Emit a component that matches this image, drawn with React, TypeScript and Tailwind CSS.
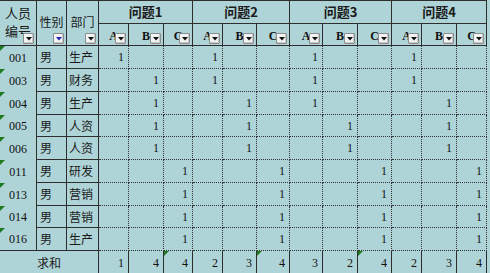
import React from 'react';

type Row = { id: string; sex: string; dept: string; picks: number[] };

const rows: Row[] = [
  { id: '001', sex: '男', dept: '生产', picks: [0, 0, 0, 0] },
  { id: '003', sex: '男', dept: '财务', picks: [1, 0, 0, 0] },
  { id: '004', sex: '男', dept: '生产', picks: [1, 1, 0, 1] },
  { id: '005', sex: '男', dept: '人资', picks: [1, 1, 1, 1] },
  { id: '006', sex: '男', dept: '人资', picks: [1, 1, 1, 1] },
  { id: '011', sex: '男', dept: '研发', picks: [2, 2, 2, 2] },
  { id: '013', sex: '男', dept: '营销', picks: [2, 2, 2, 2] },
  { id: '014', sex: '男', dept: '营销', picks: [2, 2, 2, 2] },
  { id: '016', sex: '男', dept: '生产', picks: [2, 2, 2, 2] },
];

const questions = ['问题1', '问题2', '问题3', '问题4'];
const letters = ['A', 'B', 'C'];

// totals per question/option, 12 cells
const sums = questions.flatMap((_, q) =>
  letters.map((_, o) => rows.filter((r) => r.picks[q] === o).length)
);

const cjk = "font-['Noto_Sans_CJK_SC',sans-serif]";
const num = "font-['Liberation_Serif',serif] text-[#111]";

function FilterButton({ active }: { active?: boolean }) {
  return (
    <span className="absolute right-[2px] bottom-[1px] flex h-[11px] w-[11px] items-center justify-center rounded-[1px] border border-[#8c8c8c] bg-[#f3f3f3] shadow-[inset_-1px_-1px_0_#c8c8c8]">
      <svg width="6" height="4" viewBox="0 0 6 4">
        <polygon points="0,0 6,0 3,3.5" fill={active ? '#2424b8' : '#111'} />
      </svg>
    </span>
  );
}

function Flag() {
  return (
    <span className="absolute left-0 top-0 h-0 w-0 border-t-[5px] border-r-[5px] border-t-[#1e7a1e] border-r-transparent" />
  );
}

export default function App() {
  return (
    <div className="h-[273px] w-[490px] overflow-hidden bg-[#afd4d8] text-[#1a1a1a]">
      <div className="grid w-[487px] grid-cols-[37px_30px_32px_30px_35px_29px_30px_34px_33px_33px_35px_34px_30px_35px_30px] grid-rows-[23px_22px_23px_23px_23px_22px_23px_23px_23px_22px_23px_23px] border-t border-[#2e2e2e]">
        {/* header */}
        <div className={`relative row-span-2 border-r border-b border-[#2e2e2e] pt-[3px] text-center text-[13px] leading-[18px] ${cjk}`}>
          人员<br />编号
          <FilterButton />
        </div>
        <div className={`relative row-span-2 flex items-center justify-center border-r border-b border-[#2e2e2e] pb-[2px] text-[12px] ${cjk}`}>
          性别
          <FilterButton active />
        </div>
        <div className={`relative row-span-2 flex items-center justify-center border-r border-b border-[#2e2e2e] pb-[2px] text-[12px] ${cjk}`}>
          部门
          <FilterButton />
        </div>
        {questions.map((q) => (
          <div
            key={q}
            className={`col-span-3 flex items-center justify-center border-r border-b border-[#2e2e2e] text-[13px] font-bold ${cjk}`}
          >
            {q}
          </div>
        ))}
        {questions.flatMap((q) =>
          letters.map((l) => (
            <div
              key={q + l}
              className={`relative flex items-center justify-center border-r border-b border-[#2e2e2e] pt-[2px] text-[12px] font-bold ${num}`}
            >
              {l}
              <FilterButton />
            </div>
          ))
        )}

        {/* data rows */}
        {rows.map((r, i) => {
          const last = i === rows.length - 1;
          const bottom = last ? 'border-b border-b-[#2e2e2e]' : 'border-b border-dotted border-b-[#333]';
          return (
            <React.Fragment key={r.id}>
              <div className={`relative flex items-center justify-center border-r border-r-[#2e2e2e] text-[12px] ${num} ${last ? 'border-b border-b-[#2e2e2e]' : ''}`}>
                <Flag />
                {r.id}
              </div>
              <div className={`flex items-center border-r border-b border-[#2e2e2e] pl-[3px] text-[12px] ${cjk}`}>{r.sex}</div>
              <div className={`flex items-center border-r border-b border-[#2e2e2e] pl-[2px] text-[12px] ${cjk}`}>{r.dept}</div>
              {r.picks.flatMap((p, q) =>
                letters.map((_, o) => (
                  <div
                    key={`${q}-${o}`}
                    className={`flex items-center justify-end border-r border-dotted border-r-[#333] pr-[4px] text-[12px] ${num} ${bottom}`}
                  >
                    {p === o ? '1' : ''}
                  </div>
                ))
              )}
            </React.Fragment>
          );
        })}

        {/* totals */}
        <div className={`col-span-3 flex items-center justify-center border-r border-[#2e2e2e] text-[12px] ${cjk}`}>求和</div>
        {sums.map((s, i) => (
          <div
            key={i}
            className={`relative flex items-center justify-end border-r border-[#2e2e2e] pr-[4px] text-[12px] ${num}`}
          >
            {(i === 2 || i === 5 || i === 8) && <Flag />}
            {s}
          </div>
        ))}
      </div>
    </div>
  );
}
